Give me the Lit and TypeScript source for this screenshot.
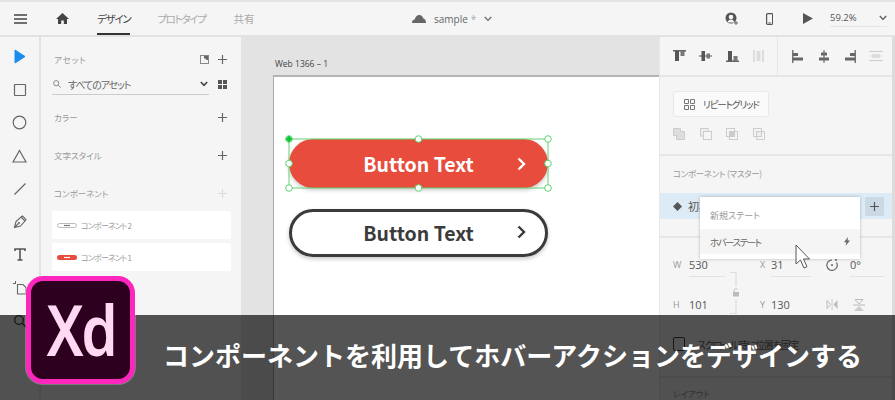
import { LitElement, html, css, svg } from "lit";
import { customElement } from "lit/decorators.js";

const g = (w: number, h: number, body: unknown) =>
  html`<svg width=${w} height=${h} viewBox="0 0 ${w} ${h}" fill="none">${body}</svg>`;

const plus = (c = "#666") => g(9, 9, svg`<path d="M4.5 0v9M0 4.5h9" stroke=${c} stroke-width="1.2"/>`);
const chev = (c = "#555", w = 1.5) => g(8, 6, svg`<path d="M.8 1l3.2 3.4L7.2 1" stroke=${c} stroke-width=${w}/>`);
const arrowRight = (c: string) => g(9, 14, svg`<path d="M1.5 1.5L7 7l-5.500 5.500" stroke=${c} stroke-width="2.400"/>`);

const D = "#666";
const alignIcons = [
  g(14, 12, svg`<path d="M0 .8h13" stroke="#555" stroke-width="1.400"/><rect x="2" y="1" width="4" height="10" fill="#555"/><rect x="7.500" y="1" width="4" height="5" fill="#777"/>`),
  g(14, 12, svg`<path d="M0 6h13" stroke="#555"/><rect x="2.500" y="1" width="3.500" height="10" fill="#555"/><rect x="7.500" y="3.500" width="3.500" height="5" fill="#777"/>`),
  g(14, 12, svg`<path d="M0 11.200h13" stroke="#555" stroke-width="1.400"/><rect x="2" y="1" width="4" height="10" fill="#555"/><rect x="7.500" y="6" width="4" height="5" fill="#777"/>`),
  g(14, 12, svg`<path d="M2 0v12M11 0v12" stroke="#ccc" stroke-width="1.200"/><rect x="4.500" y="1" width="4" height="10" fill="#ddd"/>`),
  g(12, 13, svg`<path d="M.8 0v13" stroke="#555" stroke-width="1.200"/><rect x="1" y="3" width="5" height="3" fill="#666"/><rect x="1" y="7.500" width="10" height="3" fill="#666"/>`),
  g(12, 13, svg`<path d="M6 0v13" stroke="#555"/><rect x="3" y="2.500" width="6" height="3" fill="#666"/><rect x="1" y="7.500" width="10" height="3" fill="#666"/>`),
  g(12, 13, svg`<path d="M11.200 0v13" stroke="#555" stroke-width="1.200"/><rect x="6" y="3" width="5" height="3" fill="#666"/><rect x="1" y="7.500" width="10" height="3" fill="#666"/>`),
  g(14, 12, svg`<path d="M0 1.500h14M0 10.500h14" stroke="#ccc"/><rect x="2.500" y="4" width="9" height="4" fill="#ddd"/>`),
];

const booleans = [
  svg`<path d="M.5.500h7v3h4v8h-8v-4h-3z" fill="#ddd" stroke="#ccc"/>`,
  svg`<rect x=".5" y=".5" width="7.500" height="7.500" fill="#eee" stroke="#ccc"/><rect x="3.500" y="3.500" width="8" height="8" fill="#f5f5f5" stroke="#ccc"/>`,
  svg`<rect x=".5" y=".5" width="8" height="8" stroke="#ccc"/><rect x="3.500" y="3.500" width="8" height="8" stroke="#ccc"/><rect x="3.500" y="3.500" width="5" height="5" fill="#ccc"/>`,
  svg`<path d="M.5.500h8v3h3v8h-8v-3h-3z" stroke="#ccc"/><rect x="3.500" y="3.500" width="5" height="5" fill="#eee" stroke="#ccc"/>`,
];

const tools = [
  g(14, 15, svg`<path d="M2 1v13l10-6.500z" fill="#1a8cf0" stroke="#1a8cf0"/>`),
  g(14, 14, svg`<rect x="1.500" y="1.500" width="11" height="11" rx=".5" stroke=${D} stroke-width="1.200"/>`),
  g(15, 15, svg`<circle cx="7.500" cy="7.500" r="6.300" stroke=${D} stroke-width="1.200"/>`),
  g(15, 14, svg`<path d="M7.500 1.500L14 13H1z" stroke=${D} stroke-width="1.200"/>`),
  g(14, 14, svg`<path d="M1.500 12.500l11-11" stroke=${D} stroke-width="1.200"/>`),
  g(14, 14, svg`<path d="M1.500 12.500l1.500-6 5-4.500 4 4-4.500 5zM1.500 12.500l4-4M8 2l1.500-1 3.500 3.500-1 1.500" stroke=${D} stroke-width="1.100"/><circle cx="6" cy="8" r="1" fill=${D}/>`),
  g(12, 13, svg`<path d="M1 3V1h10v2M6 1v11M3.500 12h5" stroke="#555" stroke-width="1.600"/>`),
  g(14, 14, svg`<path d="M0 2.500h3M2.500 0v3" stroke=${D}/><path d="M4.500 3.500h5.500l3 3v6.500H4.500z" stroke=${D} stroke-width="1.100"/>`),
  g(14, 14, svg`<circle cx="6" cy="6" r="4.300" stroke="#444" stroke-width="1.300"/><path d="M9 9l4 4" stroke="#444" stroke-width="1.600"/>`),
];

const handles = [[1, 1], [130.5, 1], [260, 1], [1, 25.5], [260, 25.5], [1, 50], [130.5, 50], [260, 50]];

@customElement("app-root")
export class AppRoot extends LitElement {
  static styles = css`
    :host { display: block; position: relative; width: 895px; height: 400px; overflow: hidden; background: #f5f5f5;
      font-family: "Noto Sans CJK JP", "Noto Sans", sans-serif; color: #666; font-feature-settings: "palt"; }
    svg { display: block; flex: none; }
    .top { display: grid; grid-template-columns: 412px 313px 1fr; height: 33px; border-top: 2px solid #e4e4e4; border-bottom: 2px solid #e2e2e2; }
    .tl, .tc, .tr { display: flex; align-items: center; }
    .tl { padding-left: 14px; }
    .burger { margin-right: 29px; }
    .home { margin-right: 28px; }
    .tab { font-size: 10.500px; letter-spacing: -1.300px; color: #aaa; margin-right: 28px; height: 33px; line-height: 33px; white-space: nowrap; box-sizing: border-box; }
    .tab.on { color: #444; margin-right: 27px; border-bottom: 2px solid #333; }
    .tab.plain { letter-spacing: 0; }
    .file { font-family: "Open Sans", sans-serif; font-size: 10px; color: #666; margin: 0 8px 0 8px; white-space: nowrap; display: flex; gap: 3px; }
    .file i { font-style: normal; color: #aaa; }
    .phone { margin: 0 30px 0 27px; }
    .zoom { margin: 7px 0 0 17px; width: 57px; height: 18px; align-self: flex-start; border-bottom: 1px solid #e6e6e6; display: flex; align-items: center; justify-content: space-between;
      font-family: "Open Sans", sans-serif; font-size: 9.500px; color: #555; box-sizing: border-box; }
    .body { display: grid; grid-template-columns: 41px 200px 418px 236px; height: 363px; }

    .tools { border-right: 2px solid #e2e2e2; display: flex; flex-direction: column; align-items: center; padding-top: 3px; }
    .tool { height: 33px; width: 39px; display: flex; align-items: center; justify-content: center; flex: none; }

    .assets { padding: 12px 14px 0 11px; }
    .arow { height: 20px; display: flex; align-items: center; justify-content: space-between; padding-left: 2px; font-size: 8.500px; color: #999; }
    .arow .wide { letter-spacing: .9px; }
    .sec { margin-top: 18px; }
    .sec.first { margin-top: 12px; }
    .aicons { display: flex; gap: 9px; align-items: center; }
    .search { display: flex; align-items: center; margin-top: 5px; height: 21px; }
    .sbox { width: 157px; height: 21px; box-sizing: border-box; border-bottom: 1px solid #ccc; display: flex; align-items: center; padding-left: 1px; font-size: 10px; letter-spacing: -1.100px; color: #666; white-space: nowrap; margin-right: 9px; }
    .sbox .mag { margin-right: 7px; }
    .sbox .c { margin-left: auto; margin-right: 1px; }
    .cards { margin: 8px -4px 0 0; display: grid; gap: 4px; }
    .card { height: 28px; background: #fff; border-radius: 2px; display: flex; align-items: center; padding-left: 5px; gap: 4px; font-size: 8px; letter-spacing: -.8px; color: #999; white-space: nowrap; }

    .canvas { background: #e3e3e3; padding: 21px 0 0 32px; overflow: hidden; }
    .ablabel { font-family: "Open Sans", sans-serif; font-size: 8.500px; line-height: 12px; height: 17px; padding-left: 2px; color: #444; }
    .board { position: relative; background: #fff; height: 330px; border-left: 1px solid #aaa; border-top: 2px solid #b4b4b4; padding: 62px 0 0 15px; }
    .btn { width: 259px; height: 49px; box-sizing: border-box; border-radius: 25px; display: flex; align-items: center; justify-content: center; position: relative;
      font-size: 19.500px; font-weight: 700; box-shadow: 0 2px 4px rgba(0,0,0,.22); }
    .btn .arr { position: absolute; right: 22px; top: 50%; margin-top: -7px; }
    .red { background: #e74c3c; color: #fff; }
    .line { margin-top: 21px; height: 48px; background: #fff; border: 3px solid #3b3b3b; color: #3b3b3b; width: 259px; padding-bottom: 2px; }
    .line .arr { right: 19px; margin-top: -8px; }
    .sel { position: absolute; left: 9.500px; top: 57px; }

    .right { border-left: 1px solid #e8e8e8; border-right: 3px solid #dcdcdc; position: relative; }
    .aligns { display: flex; height: 38px; border-bottom: 2px solid #e6e6e6; }
    .ag1, .ag2 { display: grid; align-items: center; justify-items: center; }
    .ag1 { grid-template-columns: repeat(4, 26.500px); width: 118px; padding-left: 6.500px; box-sizing: border-box; border-right: 1px solid #e6e6e6; }
    .ag2 { grid-template-columns: repeat(4, 26px); padding-left: 7px; }
    .rep { padding: 14px 13px 0; height: 63px; border-bottom: 2px solid #e6e6e6; }
    .repbtn { width: 96px; height: 26px; box-sizing: border-box; background: #fafafa; border: 1px solid #e8e8e8; border-radius: 3px; display: flex; align-items: center; gap: 8px; padding-left: 10px; font-size: 9.500px; letter-spacing: -1.100px; color: #555; white-space: nowrap; }
    .bools { display: flex; gap: 14.500px; margin-top: 11px; }
    .comp { padding-top: 8px; border-bottom: 2px solid #e6e6e6; height: 72px; }
    .ctitle { height: 18px; line-height: 18px; padding-left: 13px; font-size: 8.500px; letter-spacing: -.3px; color: #999; margin-bottom: 11px; white-space: nowrap; }
    .state { position: relative; height: 26px; background: #dcebf6; display: flex; align-items: center; padding-left: 13px; gap: 6px; font-size: 11px; color: #555; white-space: nowrap; }
    .addst { position: absolute; left: 205px; top: 4px; width: 19px; height: 19px; border-radius: 2px; background: #cbd9e4; display: flex; align-items: center; justify-content: center; }
    .menu { position: absolute; left: 40px; top: 4px; width: 160px; height: 62px; background: #fff; box-shadow: 0 0 3px rgba(0,0,0,.25); z-index: 2; font-size: 10.500px; color: #666; }
    .mi { height: 25px; display: flex; align-items: center; justify-content: space-between; padding: 0 10px; }
    .mi.f { margin-top: 6px; margin-bottom: 1px; height: 25px; }
    .mi.h { background: #f5f5f5; font-size: 9.500px; letter-spacing: -1.500px; }
    .cursor { position: absolute; left: 135px; top: 51px; z-index: 3; }

    .fields { display: grid; grid-template-columns: 52px 35px 51px 39px 34px; grid-template-rows: 25px 25px; row-gap: 15px; padding: 14px 0 0 13px; }
    .f { display: flex; align-items: center; font-size: 9px; color: #999; }
    .f b { font-weight: 400; font-family: "Open Sans", sans-serif; width: 16px; flex: none; }
    .f span { flex: 1; height: 25px; line-height: 25px; box-sizing: border-box; font-family: "Open Sans", sans-serif; font-size: 11px; color: #555; white-space: nowrap; }
    .f span.u { border-bottom: 1px solid #e2e2e2; }
    .f.x b { width: 11px; }
    .lock { grid-column: 2; grid-row: 1 / 3; padding-left: 3px; padding-top: 20px; }
    .c3 { grid-column: 3; }
    .icons { display: flex; align-items: center; gap: 15px; padding-left: 15px; }
    .iconsw { grid-column: 4 / 6; }
    .check { display: flex; align-items: center; gap: 12px; margin: 20px 0 0 13px; height: 14px; font-size: 10px; letter-spacing: -1.200px; color: #666; white-space: nowrap; }
    .box { width: 12px; height: 14px; box-sizing: border-box; border: 1.500px solid #444; border-radius: 2px; flex: none; }
    .lay { margin-top: 25px; border-top: 2px solid #e6e6e6; padding: 10px 0 0 13px; font-size: 8.500px; line-height: 11px; color: #999; }

    .banner { position: absolute; left: 0; top: 315px; width: 895px; height: 85px; background: rgba(0,0,0,.67); box-sizing: border-box; padding: 0 0 7px 163px; display: flex; align-items: center;
      color: #fff; font-size: 26px; font-weight: 700; letter-spacing: 0; white-space: nowrap; font-feature-settings: normal; }
    .logo { position: absolute; left: 26px; top: 276px; width: 109px; height: 108px; box-sizing: border-box; border: 5px solid #ff26be; border-radius: 17px; background: #2e001f;
      box-shadow: 0 0 0 1px rgba(255,255,255,.25); display: flex; align-items: center; justify-content: center; }
    .logo span { font-family: "Noto Sans", sans-serif; font-size: 71px; font-weight: 600; line-height: 1; color: #ffd9f2; transform: scaleX(.82); letter-spacing: -3px; margin-top: -4px; }
  `;

  render() {
    return html`
      <div class="top">
        <div class="tl">
          <div class="burger">${g(13, 10, svg`<path d="M0 1h13M0 5h13M0 9h13" stroke="#444" stroke-width="1.300"/>`)}</div>
          <div class="home">${g(13, 11, svg`<path d="M6.500 0L0 6h2v5h3.200V7.500h2.600V11H11V6h2z" fill="#444"/>`)}</div>
          <div class="tab on">デザイン</div>
          <div class="tab">プロトタイプ</div>
          <div class="tab plain">共有</div>
        </div>
        <div class="tc">
          ${g(14, 8, svg`<path d="M0 8c0-2 1-3.200 2.600-3.400C3.300 2 5.200 0 7.300 0c2 0 3.600 1.500 4 3.600C13 4 14 5.800 14 8z" fill="#666"/>`)}
          <span class="file">sample<i>*</i></span>
          ${chev("#666", 1.2)}
        </div>
        <div class="tr">
          ${g(14, 14, svg`<circle cx="6" cy="6" r="5.500" fill="#555"/><circle cx="6" cy="5" r="2.300" fill="#f5f5f5"/><path d="M2.500 10.500c.5-2 2-3 3.500-3s3 1 3.500 3z" fill="#f5f5f5"/><path d="M11 9v4M9 11h4" stroke="#666"/>`)}
          <div class="phone">${g(7, 12, svg`<rect x=".6" y=".6" width="6" height="10.800" rx="1" stroke="#555" stroke-width="1.200"/><path d="M2.500 9.800h2" stroke="#555"/>`)}</div>
          ${g(10, 11, svg`<path d="M0 0l10 5.500L0 11z" fill="#555"/>`)}
          <div class="zoom"><span>59.2%</span>${chev("#555", 1.2)}</div>
        </div>
      </div>
      <div class="body">
        <div class="tools">${tools.map((t) => html`<div class="tool">${t}</div>`)}</div>
        <div class="assets">
          <div class="arow"><span class="wide">アセット</span>
            <div class="aicons">
              ${g(9, 9, svg`<rect x=".5" y=".5" width="8" height="8" stroke="#888"/><path d="M4 1h4v4H6.500L5.500 3.500H4z" fill="#666"/>`)}
              ${plus()}
            </div>
          </div>
          <div class="search">
            <div class="sbox">
              <div class="mag">${g(8, 8, svg`<circle cx="3.200" cy="3.200" r="2.600" stroke="#888"/><path d="M5.200 5.200L7.600 7.600" stroke="#888"/>`)}</div>
              <span>すべてのアセット</span>
              <div class="c">${chev("#444", 1.6)}</div>
            </div>
            ${g(9, 9, svg`<path d="M0 0h4v4H0zM5 0h4v4H5zM0 5h4v4H0zM5 5h4v4H5z" fill="#555"/>`)}
          </div>
          <div class="arow sec first"><span>カラー</span>${plus()}</div>
          <div class="arow sec"><span>文字スタイル</span>${plus()}</div>
          <div class="arow sec"><span>コンポーネント</span>${plus("#ddd")}</div>
          <div class="cards">
            <div class="card">${g(20, 5, svg`<rect x=".5" y=".5" width="19" height="4" rx="2" fill="#fff" stroke="#bbb"/><path d="M7 2.500h6" stroke="#777" stroke-width="1.200"/>`)}コンポーネント 2</div>
            <div class="card">${g(20, 5, svg`<rect width="20" height="5" rx="2.500" fill="#e74c3c"/><path d="M7 2.500h6" stroke="#fff" stroke-width="1.200"/>`)}コンポーネント 1</div>
          </div>
        </div>
        <div class="canvas">
          <div class="ablabel">Web 1366 – 1</div>
          <div class="board">
            <div class="btn red">Button Text<span class="arr">${arrowRight("#fff")}</span></div>
            <div class="btn line">Button Text<span class="arr">${arrowRight("#3b3b3b")}</span></div>
            <svg class="sel" width="270" height="60" viewBox="-4 -4 270 60">
              <rect x="1" y="1" width="259" height="49" stroke="#62d26f" fill="none"/>
              ${handles.map(([x, y]) => svg`<circle cx=${x} cy=${y} r="3.300" fill="#fff" stroke="#62d26f"/>`)}
              <path d="M1 -2.500L4.500 1 1 4.500-2.500 1z" fill="#12c43a"/>
            </svg>
          </div>
        </div>
        <div class="right">
          <div class="aligns">
            <div class="ag1">${alignIcons.slice(0, 4)}</div>
            <div class="ag2">${alignIcons.slice(4)}</div>
          </div>
          <div class="rep">
            <div class="repbtn">
              ${g(11, 11, svg`<path d="M.5.500h4v4h-4zM6.500.500h4v4h-4zM.5 6.500h4v4h-4zM6.500 6.500h4v4h-4z" stroke="#777"/>`)}
              リピートグリッド
            </div>
            <div class="bools">${booleans.map((b) => g(12, 12, b))}</div>
          </div>
          <div class="comp">
            <div class="ctitle">コンポーネント (マスター)</div>
            <div class="state">
              ${g(9, 9, svg`<path d="M4.500 0L9 4.500 4.500 9 0 4.500z" fill="#555"/>`)}
              <span>初期ステート</span>
              <div class="addst">${plus("#555")}</div>
              <div class="menu">
                <div class="mi f">新規ステート</div>
                <div class="mi h">ホバーステート
                  ${g(6, 9, svg`<path d="M4 0L0 5.200h2.500L1.500 9 6 3.600H3.500z" fill="#666"/>`)}
                </div>
              </div>
              <div class="cursor">
                ${g(17, 26, svg`<path d="M1 1v19l4.500-4 3.500 8 3-1.300-3.500-7.700h6z" fill="#fff" stroke="#555" stroke-width="1"/>`)}
              </div>
            </div>
          </div>
          <div class="fields">
            <div class="f"><b>W</b><span class="u">530</span></div>
            <div class="lock">${g(14, 42, svg`<path d="M2 .5h6v14M2 41.500h6V27" stroke="#ddd" stroke-width="1.200"/><rect x="5" y="20" width="6" height="4.500" fill="#bbb"/><path d="M6 20v-1.500a2 2 0 0 1 3.500-1" stroke="#bbb"/>`)}</div>
            <div class="f x c3"><b>X</b><span class="u">31</span></div>
            <div class="icons">
              ${g(12, 12, svg`<path d="M10.500 3.500A5.200 5.200 0 1 1 6 1" stroke="#666" stroke-width="1.200"/><circle cx="6" cy="6" r="1" fill="#666"/><circle cx="10" cy="1" r="1" fill="#666"/>`)}
            </div>
            <div class="f"><span class="u">0°</span></div>
            <div class="f"><b>H</b><span>101</span></div>
            <div class="f x c3"><b>Y</b><span>130</span></div>
            <div class="icons iconsw">
              ${g(12, 11, svg`<path d="M1 1.500L4.500 5.500 1 9.500z" stroke="#bbb" fill="none"/><path d="M6 0v11" stroke="#ccc"/><path d="M11.500 1L7.500 5.500l4 4.500z" fill="#bbb"/>`)}
              ${g(12, 12, svg`<path d="M2 .5h8L6 5z" stroke="#bbb" fill="none"/><path d="M1 12h10L6 7z" fill="#ccc"/><path d="M0 6h12" stroke="#bbb"/>`)}
            </div>
          </div>
          <div class="check"><div class="box"></div>スクロール時に位置を固定</div>
          <div class="lay">レイアウト</div>
        </div>
      </div>
      <div class="banner">コンポーネントを利用してホバーアクションをデザインする</div>
      <div class="logo"><span>Xd</span></div>
    `;
  }
}
